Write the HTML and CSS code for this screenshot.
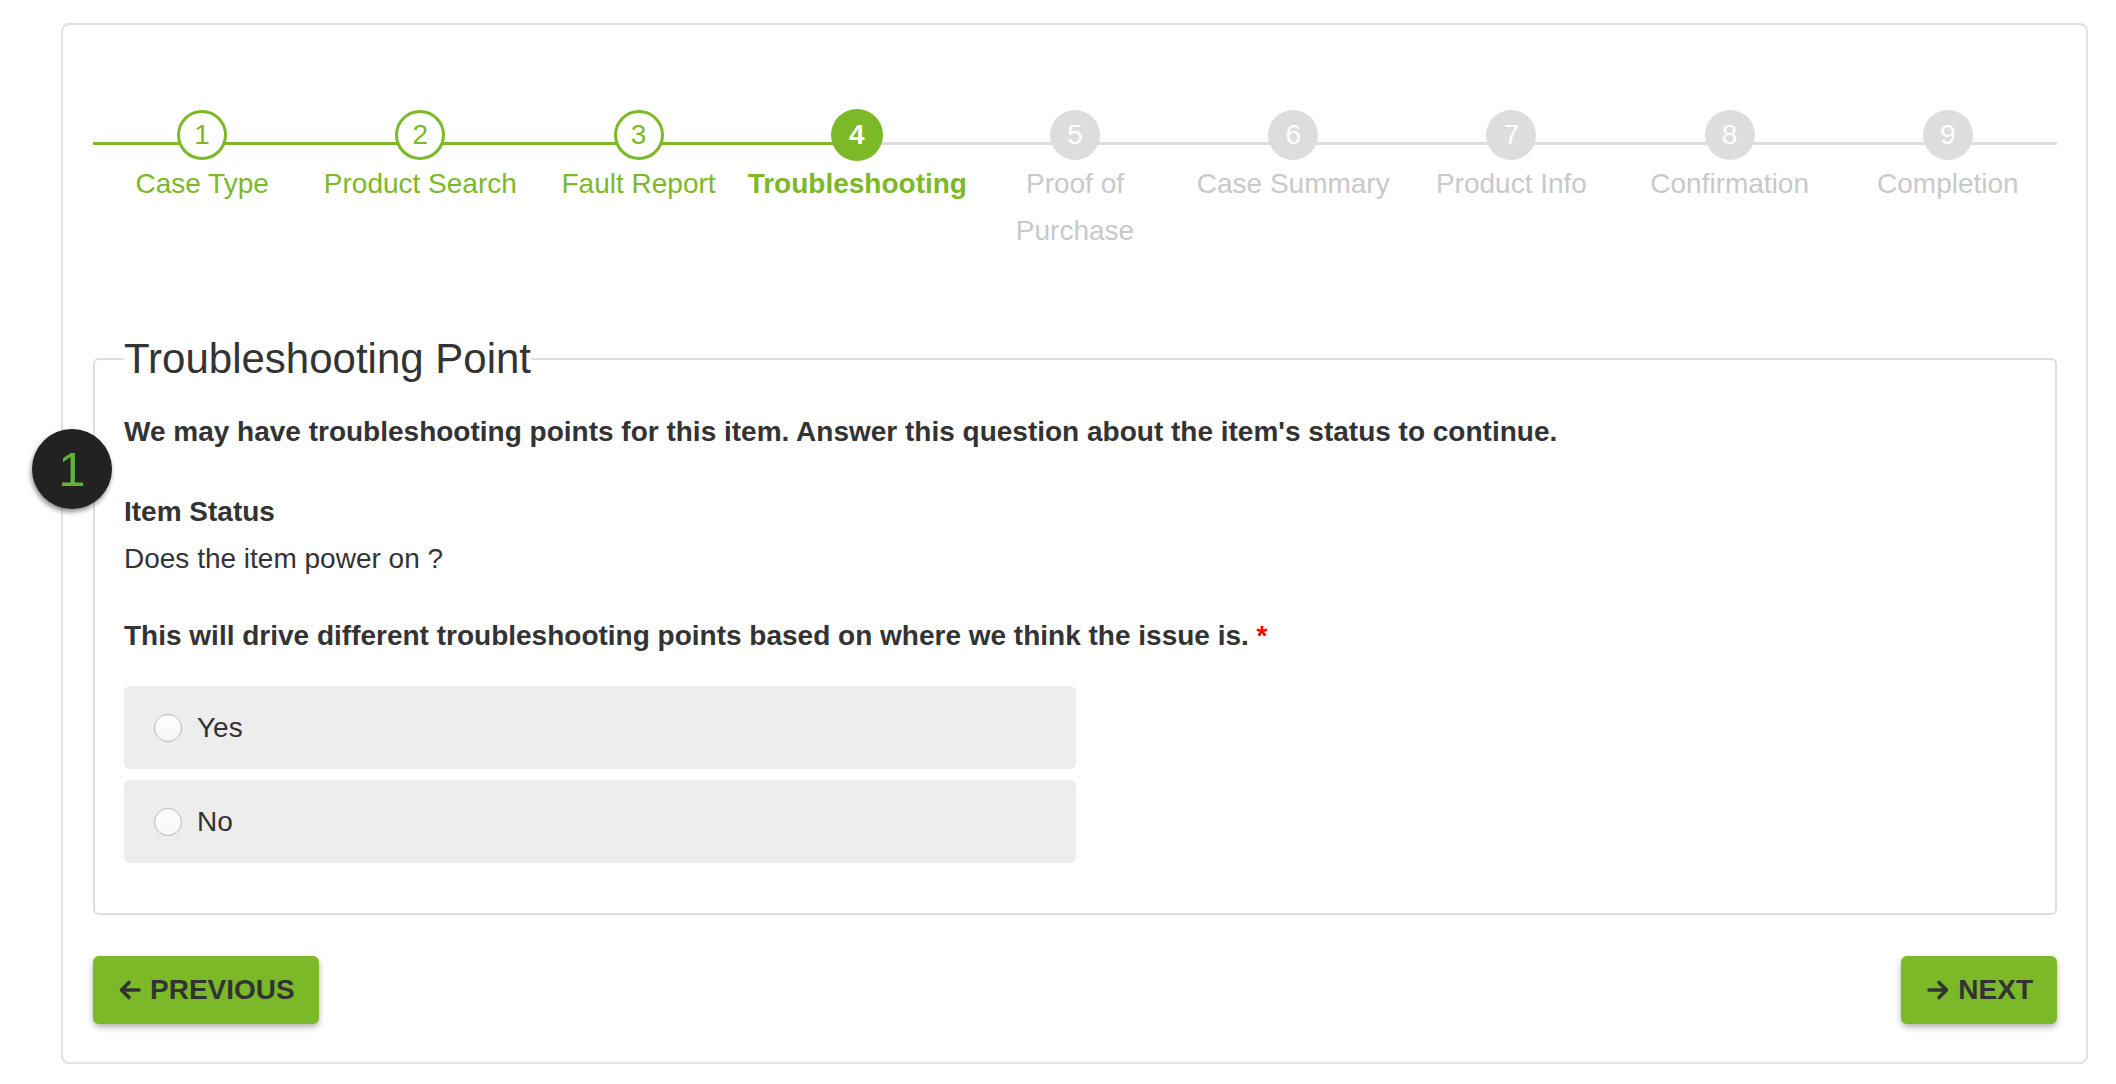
FILE: index.html
```html
<!DOCTYPE html>
<html lang="en">
<head>
  <meta charset="UTF-8" />
  <title>Troubleshooting</title>
  <link rel="stylesheet" href="styles.css">
</head>

<body>
  <div class="card">
    <ol class="steps">
      <li class="done"><span class="dot">1</span><span class="label">Case Type</span></li>
      <li class="done"><span class="dot">2</span><span class="label">Product Search</span></li>
      <li class="done"><span class="dot">3</span><span class="label">Fault Report</span></li>
      <li class="active"><span class="dot">4</span><span class="label">Troubleshooting</span></li>
      <li><span class="dot">5</span><span class="label">Proof of Purchase</span></li>
      <li><span class="dot">6</span><span class="label">Case Summary</span></li>
      <li><span class="dot">7</span><span class="label">Product Info</span></li>
      <li><span class="dot">8</span><span class="label">Confirmation</span></li>
      <li><span class="dot">9</span><span class="label">Completion</span></li>
    </ol>

    <fieldset class="panel">
      <legend>Troubleshooting Point</legend>
      <p class="intro">We may have troubleshooting points for this item. Answer this question about the item's status to continue.</p>
      <p class="field-label">Item Status</p>
      <p class="question">Does the item power on ?</p>
      <p class="hint">This will drive different troubleshooting points based on where we think the issue is. <span class="req">*</span></p>

      <div class="options">
        <label class="option"><input type="radio" name="status" value="yes"> Yes</label>
        <label class="option"><input type="radio" name="status" value="no"> No</label>
      </div>
    </fieldset>

    <div class="actions">
      <button class="btn">
        <svg width="24" height="24" viewBox="0 0 24 24"><path d="M21 12H4M11 4.5L3.5 12L11 19.5" fill="none" stroke="#333" stroke-width="3.6" stroke-linecap="round" stroke-linejoin="round"/></svg>
        PREVIOUS
      </button>
      <button class="btn">
        <svg width="24" height="24" viewBox="0 0 24 24"><path d="M3 12H20M13 4.5L20.5 12L13 19.5" fill="none" stroke="#333" stroke-width="3.6" stroke-linecap="round" stroke-linejoin="round"/></svg>
        NEXT
      </button>
    </div>
  </div>

  <div class="marker">1</div>
</body>
</html>
```

FILE: styles.css
```css
body {
  margin: 0;
  background: #fff;
  font-family: "Liberation Sans", Arial, sans-serif;
  color: #333;
}
.card {
  position: relative;
  margin: 23px 28px 20px 61px;
  padding: 85px 29px 38px 30px;
  border: 2px solid #e2e2e2;
  border-radius: 8px;
  background: #fff;
}

/* wizard steps */
.steps {
  display: flex;
  margin: 0;
  padding: 0;
  list-style: none;
}
.steps li {
  position: relative;
  flex: 1 1 0;
  min-width: 0;
  text-align: center;
}
.steps li::before,
.steps li::after {
  content: "";
  position: absolute;
  top: 32px;
  width: 50%;
  height: 3px;
  background: #ddd;
}
.steps li::before { left: 0; }
.steps li::after { right: 0; }
.steps li.done::before,
.steps li.done::after,
.steps li.active::before {
  background: #7cb928;
}
.dot {
  position: relative;
  z-index: 1;
  display: block;
  width: 50px;
  height: 50px;
  margin: 0 auto;
  box-sizing: border-box;
  border-radius: 50%;
  background: #ddd;
  color: #fff;
  font-size: 28px;
  line-height: 50px;
}
.done .dot {
  background: #fff;
  border: 3px solid #7cb928;
  color: #7cb928;
  line-height: 44px;
}
.active .dot {
  width: 52px;
  height: 52px;
  margin: -1px auto;
  background: #7cb928;
  font-weight: bold;
  line-height: 52px;
}
.label {
  display: block;
  font-size: 28px;
  line-height: 47px;
  color: #c9c9c9;
}
.done .label { color: #7cb928; }
.active .label { color: #7cb928; font-weight: bold; }

/* question panel */
.panel {
  margin: 81px 0 0;
  padding: 0 29px 50px;
  border: 2px solid #dedede;
  border-radius: 6px;
}
.panel legend {
  padding: 0;
  font-size: 42px;
  line-height: 48px;
  color: #333;
}
.panel p {
  margin: 0;
  font-size: 28px;
  line-height: 40px;
}
.panel .intro {
  margin-top: 29px;
  margin-bottom: 40px;
  font-weight: bold;
}
.panel .field-label { font-weight: bold; }
.panel .question { margin-top: 7px; }
.panel .hint {
  margin-top: 37px;
  font-weight: bold;
}
.req { color: #f00; }

.options {
  display: flex;
  flex-direction: column;
  gap: 11px;
  width: 952px;
  margin-top: 30px;
}
.option {
  display: flex;
  align-items: center;
  gap: 15px;
  height: 83px;
  padding: 0 30px;
  border-radius: 6px;
  background: #ededed;
  font-size: 28px;
  cursor: pointer;
}
.option input {
  appearance: none;
  width: 28px;
  height: 28px;
  margin: 0;
  border: 1px solid #b8b8b8;
  border-radius: 50%;
  background: linear-gradient(#fff, #f6f6f6);
}

/* buttons */
.actions {
  display: flex;
  justify-content: space-between;
  margin-top: 41px;
}
.btn {
  display: flex;
  align-items: center;
  gap: 8px;
  height: 68px;
  padding: 0 24px 0 25px;
  border: none;
  border-radius: 6px;
  background: #7cb928;
  color: #333;
  font-family: "Liberation Sans", Arial, sans-serif;
  font-size: 28px;
  font-weight: bold;
  box-shadow: 0 3px 6px rgba(0,0,0,0.3);
  cursor: pointer;
}

/* help marker over the panel edge */
.marker {
  position: absolute;
  left: 32px;
  top: 429px;
  width: 80px;
  height: 80px;
  border-radius: 50%;
  background: #222;
  color: #5fb336;
  font-size: 49px;
  line-height: 80px;
  text-align: center;
  box-shadow: -1px 3px 5px rgba(0,0,0,0.45);
}
```
